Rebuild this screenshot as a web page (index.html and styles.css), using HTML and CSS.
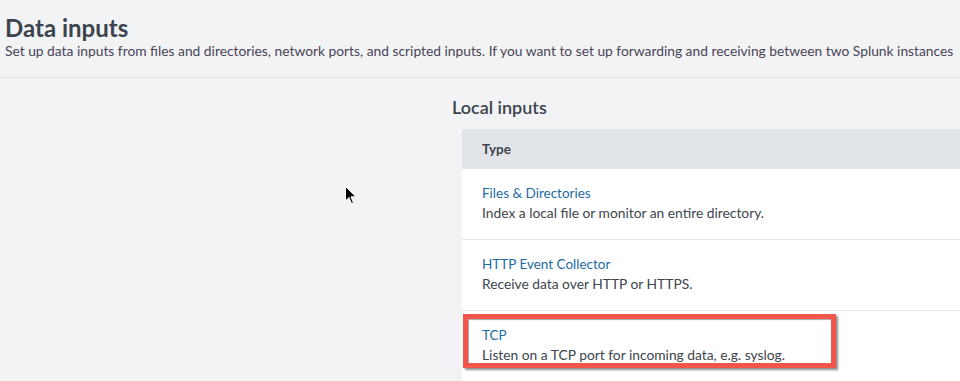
FILE: index.html
```html
<!DOCTYPE html>
<html lang="en">
<head>
    <meta charset="UTF-8">
    <title>Data inputs</title>
    <link rel="stylesheet" href="styles.css">
</head>
<body>
    <header class="page-header">
        <h1>Data inputs</h1>
        <p>Set up data inputs from files and directories, network ports, and scripted inputs. If you want to set up forwarding and receiving between two Splunk instances</p>
    </header>
    <main class="content">
        <h2>Local inputs</h2>
        <div class="inputs-table">
            <div class="table-head">Type</div>
            <div class="table-row">
                <a href="#">Files &amp; Directories</a>
                <p>Index a local file or monitor an entire directory.</p>
            </div>
            <div class="table-row">
                <a href="#">HTTP Event Collector</a>
                <p>Receive data over HTTP or HTTPS.</p>
            </div>
            <div class="table-row">
                <a href="#">TCP</a>
                <p>Listen on a TCP port for incoming data, e.g. syslog.</p>
                <span class="highlight"></span>
            </div>
        </div>
    </main>
    <svg class="cursor" width="12" height="19" viewBox="0 0 12 19">
        <path d="M0.5 0.5 L0.5 15 L4 11.5 L6.5 17.5 L8.5 16.7 L6 10.8 L11 10.8 Z" fill="#000" stroke="#fff" stroke-width="1"/>
    </svg>
</body>
</html>
```

FILE: styles.css
```css
body {
    background: #f2f3f5;
    color: #3c444d;
    font-family: Lato, "Open Sans", sans-serif;
    margin: 0;
    padding: 0;
    overflow: hidden;
    width: 960px;
    height: 381px;
    position: relative;
}
.page-header {
    padding: 14px 5px 0 5px;
    height: 63px;
    border-bottom: 1px solid #dfe3e8;
    white-space: nowrap;
}
.page-header h1 {
    margin: 0;
    font-size: 24px;
    line-height: 28px;
    font-weight: 700;
    color: #3c444d;
}
.page-header p {
    margin: 0;
    font-size: 13.8px;
    line-height: 18px;
    color: #4a4456;
}
.content {
    padding: 18px 0 0 452px;
}
.content h2 {
    margin: 0 0 11px 0;
    font-size: 18px;
    line-height: 22px;
    font-weight: 600;
}
.inputs-table {
    margin-left: 10px;
    width: 498px;
    background: #fff;
}
.table-head {
    background: #e1e5ea;
    height: 40px;
    line-height: 40px;
    padding: 0 20px;
    font-size: 13.5px;
    font-weight: 700;
}
.table-row {
    position: relative;
    padding: 14px 20px 16px 20px;
    height: 40px;
    border-bottom: 1px solid #e1e5ea;
    font-size: 13.8px;
    line-height: 20px;
}
.table-row a {
    color: #1d6aa3;
    font-size: 13.5px;
    text-decoration: none;
    display: block;
}
.table-row p {
    margin: 0;
}
.highlight {
    position: absolute;
    left: 1px;
    top: 3px;
    width: 363px;
    height: 44px;
    border: 5px solid #f2564a;
    box-shadow: 2px 2px 2px rgba(0,0,0,0.45), inset 1px 1px 1px rgba(0,0,0,0.35);
}
.cursor {
    position: absolute;
    left: 345px;
    top: 186px;
}
```
